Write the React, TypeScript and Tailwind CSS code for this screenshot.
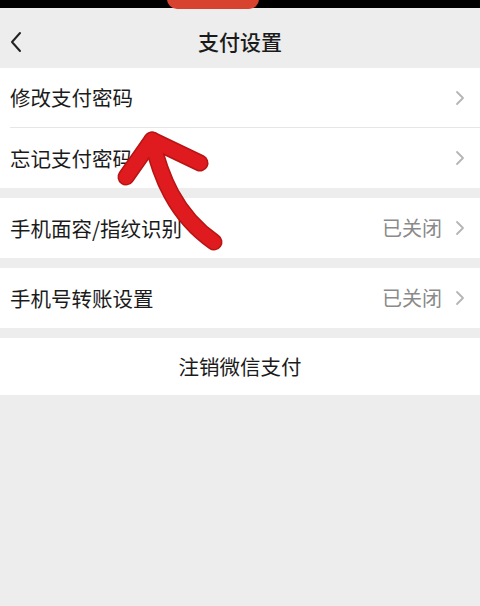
import React from "react";

const rows = [
  [{ label: "修改支付密码" }, { label: "忘记支付密码" }],
  [{ label: "手机面容/指纹识别", value: "已关闭" }],
  [{ label: "手机号转账设置", value: "已关闭" }],
];

function Chevron() {
  return (
    <svg width="10" height="16" viewBox="0 0 10 16" className="shrink-0">
      <path d="M2 2 L8 8 L2 14" fill="none" stroke="#b5b5b5" strokeWidth="1.8" strokeLinecap="round" strokeLinejoin="round" />
    </svg>
  );
}

export default function App() {
  return (
    <div
      className="relative w-[480px] h-[606px] overflow-hidden bg-[#ededed]"
      style={{ fontFamily: '"Noto Sans CJK SC", "Noto Sans", sans-serif' }}
    >
      {/* status bar */}
      <div className="h-[8px] bg-black flex justify-center">
        <div className="w-[92px] h-[10px] -mt-[1px] rounded-b-full bg-[#d8432f] ml-[-54px]" />
      </div>

      {/* header */}
      <div className="h-[60px] flex items-center px-[8px] pt-[7px] relative">
        <svg width="16" height="22" viewBox="0 0 16 22">
          <path d="M12 2 L4 11 L12 20" fill="none" stroke="#222" strokeWidth="2" strokeLinecap="round" strokeLinejoin="round" />
        </svg>
        <div className="absolute inset-0 pt-[7px] flex items-center justify-center text-[21px] font-medium text-[#1b1b1b]">
          支付设置
        </div>
      </div>

      {/* groups */}
      <div className="flex flex-col gap-[10px]">
        {rows.map((group, gi) => (
          <div key={gi} className="bg-white">
            {group.map((r, i) => (
              <div key={i} className="pl-[10px]">
                <div
                  className={`h-[60px] flex items-center pr-[15px] ${i < group.length - 1 ? "border-b border-[#e6e6e6]" : ""}`}
                >
                  <span className="flex-1 text-[20.5px] text-[#1b1b1b]">{r.label}</span>
                  {"value" in r && r.value && (
                    <span className="text-[20px] text-[#8a8a8a] mr-[13px]">{r.value}</span>
                  )}
                  <Chevron />
                </div>
              </div>
            ))}
          </div>
        ))}
        <div className="bg-white h-[57px] flex items-center justify-center text-[20.5px] text-[#1b1b1b]">
          注销微信支付
        </div>
      </div>

      {/* hand-drawn annotation arrow */}
      <svg className="absolute left-0 top-0 pointer-events-none" width="480" height="606" viewBox="0 0 480 606">
        <g fill="none" stroke="#b81414" strokeWidth="17" strokeLinecap="round" strokeLinejoin="round">
          <path d="M152 140 C 160 175, 175 215, 214 242" />
          <path d="M126 177 L152 140 L200 163" />
        </g>
        <g fill="none" stroke="#e01b1f" strokeWidth="14" strokeLinecap="round" strokeLinejoin="round">
          <path d="M152 140 C 160 175, 175 215, 214 242" />
          <path d="M126 177 L152 140 L200 163" />
        </g>
      </svg>
    </div>
  );
}
